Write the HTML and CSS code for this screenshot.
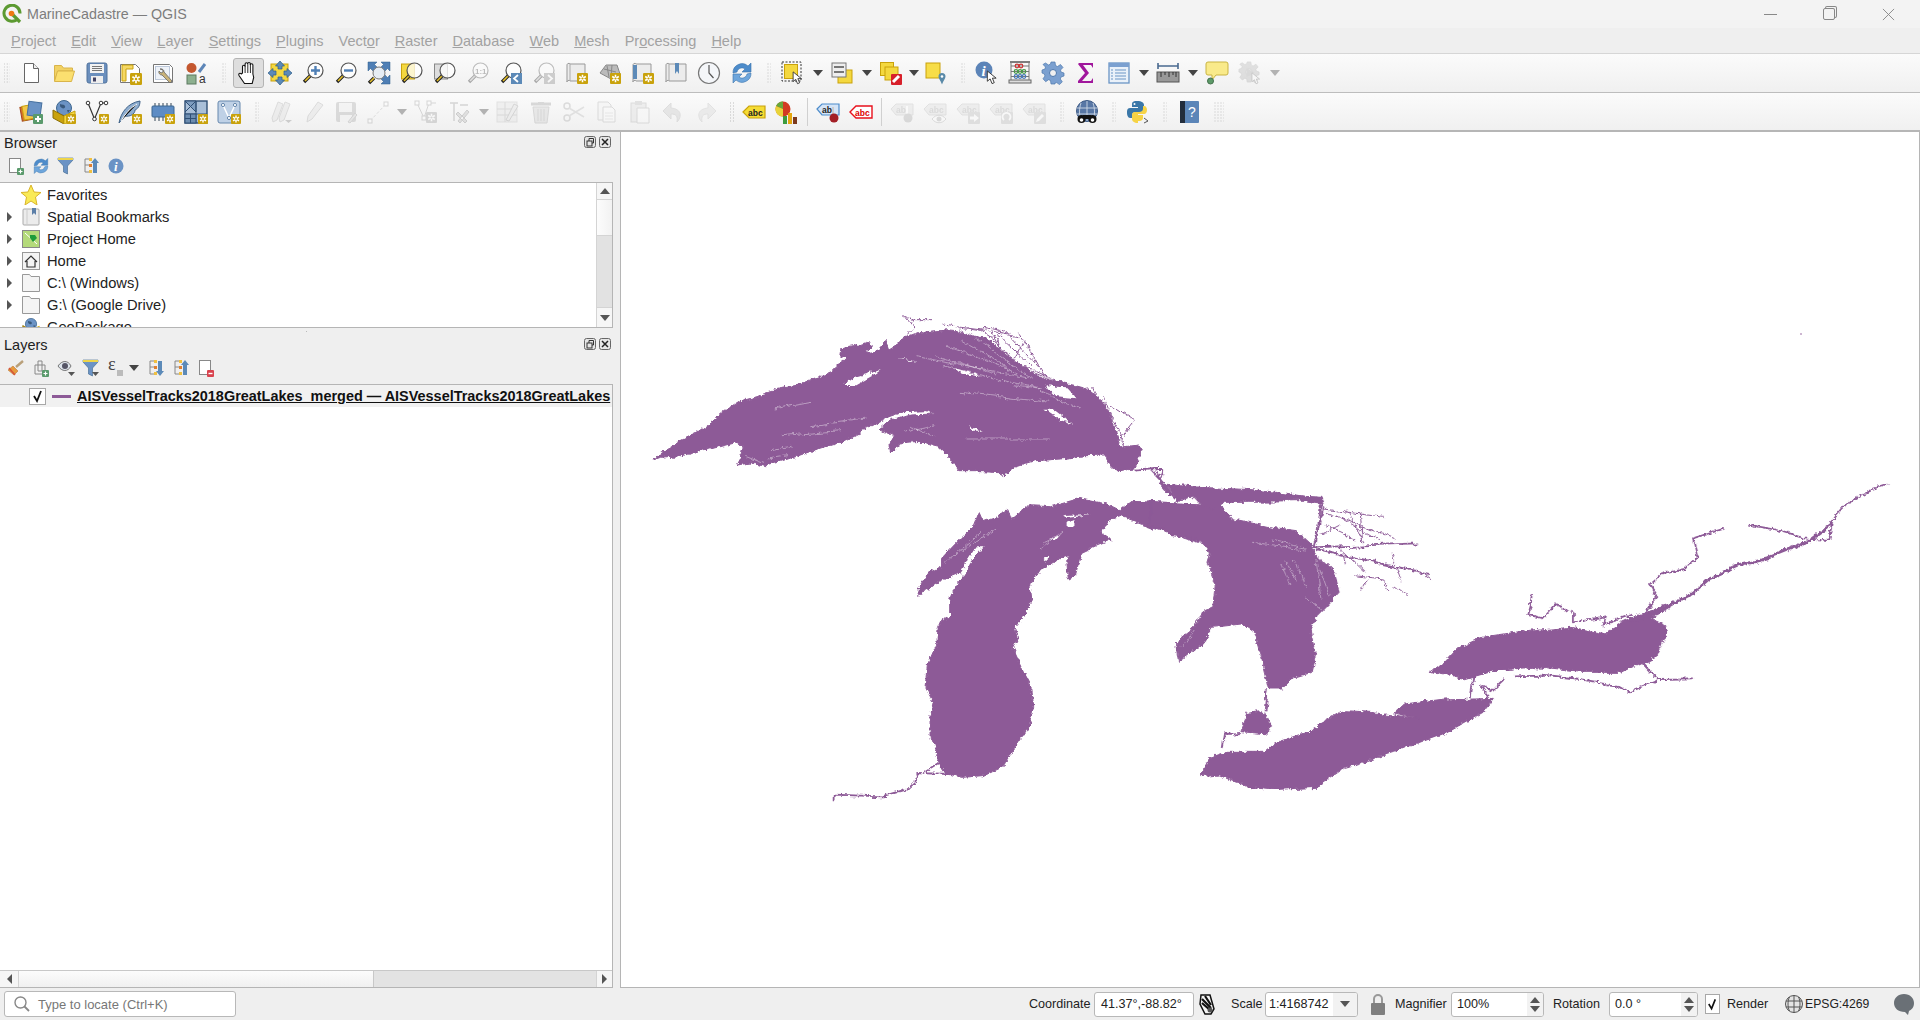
FILE: index.html
```html
<!DOCTYPE html>
<html lang="en">
<head>
<meta charset="utf-8">
<title>MarineCadastre — QGIS</title>
<link rel="stylesheet" href="styles.css">
</head>
<body>
<svg class="defs" width="0" height="0" aria-hidden="true">
<defs>
<filter id="rough" filterUnits="userSpaceOnUse" x="620" y="132" width="1298" height="854" color-interpolation-filters="sRGB">
<feTurbulence type="fractalNoise" baseFrequency=".035" numOctaves="2" seed="4" result="n1"/>
<feDisplacementMap in="SourceGraphic" in2="n1" scale="7" xChannelSelector="R" yChannelSelector="G" result="d1"/>
<feTurbulence type="fractalNoise" baseFrequency=".3" numOctaves="2" seed="9" result="n2"/>
<feDisplacementMap in="d1" in2="n2" scale="4" xChannelSelector="G" yChannelSelector="R"/>
</filter>
<symbol id="gear-badge" viewBox="0 0 10 10"><rect width="10" height="10" rx="1" fill="#c9a20c"/><path d="M5 1.500v7M2 3.200l6 3.600M8 3.200L2 6.800" stroke="#fff" stroke-width="1.400"/><circle cx="5" cy="5" r="1" fill="#c9a20c"/></symbol>
<symbol id="mag" viewBox="0 0 24 24"><circle cx="14.500" cy="9.500" r="7.500" fill="#fff" fill-opacity=".75" stroke="#555" stroke-width="1.200"/><path d="M9 15L3 21" stroke="#222" stroke-width="3.400"/><path d="M8.700 15.300L4 20" stroke="#e6c12a" stroke-width="1.600"/></symbol>
<symbol id="cursor" viewBox="0 0 12 16"><path d="M1 1l0 11 3-2.500 2 5 2.400-1-2-4.800 4 0z" fill="#fff" stroke="#333" stroke-width="1"/></symbol>
<symbol id="new" viewBox="0 0 24 24"><path d="M5.500 2.500h9l5 5v14h-14z" fill="#fff" stroke="#666"/><path d="M14.500 2.500v5h5" fill="#eee" stroke="#666"/></symbol>
<symbol id="open" viewBox="0 0 24 24"><path d="M2.500 20V4.500h7l2 2.500h9v3H6z" fill="#f2d264" stroke="#d9b44a"/><path d="M2.500 20.500l3-10.500h17l-3 10.500z" fill="#fbdf6f" stroke="#d9b44a"/></symbol>
<symbol id="save" viewBox="0 0 24 24"><rect x="2" y="2" width="20" height="20" rx="2" fill="#6b8fbd" stroke="#50729c"/><rect x="5" y="3" width="14" height="9" fill="#f2f2f2"/><path d="M7 5.500h10M7 7.500h10M7 9.500h10" stroke="#777"/><rect x="6" y="15" width="12" height="7" fill="#eee"/><rect x="8" y="16.500" width="3" height="4" fill="#446"/></symbol>
<symbol id="layout" viewBox="0 0 24 24"><path d="M2.500 3.500h15l4 4v14h-19z" fill="#fff" stroke="#777"/><path d="M4 4h11v4H8v12H4z" fill="#f5d865" stroke="#c9a20c"/><use href="#gear-badge" x="12" y="12" width="12" height="12"/></symbol>
<symbol id="layoutmgr" viewBox="0 0 24 24"><path d="M2.500 3.500h16l3 3v15h-19z" fill="#fff" stroke="#777"/><rect x="4.500" y="5.500" width="14" height="13" fill="#eef2f8" stroke="#bcc8da"/><path d="M9 8a3 3 0 0 1 4 3l8 9-2 2-8-8a3 3 0 0 1-3-4l2 2 2-1 0-2z" fill="#c8b27a" stroke="#666" stroke-width=".8"/></symbol>
<symbol id="style" viewBox="0 0 24 24"><circle cx="7.500" cy="7" r="5" fill="#c4572f"/><path d="M15 11L21 3" stroke="#5d86b8" stroke-width="3"/><rect x="3" y="14" width="9" height="9" fill="#8db08f" stroke="#5d7a60"/><text x="15" y="22" class="svg-t">a</text></symbol>
<symbol id="hand" viewBox="0 0 24 24"><path d="M6.500 12V5.500a1.300 1.300 0 0 1 2.600 0V3a1.300 1.300 0 0 1 2.600 0v-.2a1.300 1.300 0 0 1 2.600 0V4a1.300 1.300 0 0 1 2.600 0v9l.8 3.500-1.500 6H8.500L3 14.500c-1-2 1-3 2.300-1.500z" fill="#fff" stroke="#111" stroke-width="1.100"/><path d="M9.100 5v7M11.800 3v9M14.400 3v9" stroke="#111" stroke-width=".9"/></symbol>
<symbol id="pansel" viewBox="0 0 24 24"><rect x="3" y="3" width="17" height="17" fill="#f4d83f" stroke="#c9a20c"/><path d="M12 0l4.500 5H14v3h-4V5H7.500zM12 24l4.500-5H14v-3h-4v3H7.500zM0 12l5-4.500V10h3v4H5v2.500zM24 12l-5-4.500V10h-3v4h3v2.500z" fill="#5c8ab8" stroke="#2d5c8a" stroke-width=".7"/></symbol>
<symbol id="zin" viewBox="0 0 24 24"><use href="#mag" width="24" height="24"/><path d="M14.500 5v9M10 9.500h9" stroke="#4f7fb5" stroke-width="2.400"/></symbol>
<symbol id="zout" viewBox="0 0 24 24"><use href="#mag" width="24" height="24"/><path d="M10 9.500h9" stroke="#4f7fb5" stroke-width="2.400"/></symbol>
<symbol id="zfull" viewBox="0 0 24 24"><path d="M1 1h9L7.500 3.500 10 6 6 10 3.500 7.500 1 10zM23 1h-9l2.500 2.500L14 6l4 4 2.500-2.500L23 10zM23 23h-9l2.500-2.500L14 18l4-4 2.500 2.500L23 14z" fill="#4f7fb5" stroke="#2d5c8a" stroke-width=".5"/><circle cx="12" cy="12" r="6" fill="#e6edf4" stroke="#777"/><path d="M7 17L2 22" stroke="#222" stroke-width="3.400"/><path d="M7 17L3 21" stroke="#e6c12a" stroke-width="1.600"/></symbol>
<symbol id="zsel" viewBox="0 0 24 24"><rect x="1.500" y="3" width="13" height="15" fill="#f4d83f" stroke="#c9a20c"/><use href="#mag" width="24" height="24"/></symbol>
<symbol id="zlay" viewBox="0 0 24 24"><rect x="1.500" y="3" width="13" height="15" fill="#ddd" stroke="#888"/><use href="#mag" width="24" height="24"/></symbol>
<symbol id="znat" viewBox="0 0 24 24"><use href="#mag" width="24" height="24"/><text x="9" y="13" class="svg-s">1:1</text></symbol>
<symbol id="zlast" viewBox="0 0 24 24"><use href="#mag" width="24" height="24"/><rect x="12" y="12" width="11" height="11" fill="#5c8ab8"/><path d="M19 14l-4 3.500 4 3.500" fill="none" stroke="#fff" stroke-width="1.800"/></symbol>
<symbol id="znext" viewBox="0 0 24 24"><use href="#mag" width="24" height="24"/><rect x="12" y="12" width="11" height="11" fill="#888"/><path d="M16 14l4 3.500-4 3.500" fill="none" stroke="#fff" stroke-width="1.800"/></symbol>
<symbol id="mapview" viewBox="0 0 24 24"><path d="M2 4c0-2 3-2 3-1h15v17H5c0-1-3-1-3 1z" fill="#ececec" stroke="#999"/><path d="M5 3v17" stroke="#aaa"/><use href="#gear-badge" x="12" y="12" width="11" height="11"/></symbol>
<symbol id="view3d" viewBox="0 0 24 24"><path d="M2 12l6-8h11l3 9-9 5z" fill="#bbb" stroke="#888"/><path d="M6 8l12 3M9 5l2 11M14 4l-1 12" stroke="#888"/><use href="#gear-badge" x="12" y="12" width="11" height="11"/></symbol>
<symbol id="bookadd" viewBox="0 0 24 24"><path d="M2 4c0-2 3-2 3-1h15v17H5c0-1-3-1-3 1z" fill="#ececec" stroke="#999"/><path d="M2 4h4v14H2z" fill="#5c8ab8"/><use href="#gear-badge" x="12" y="12" width="11" height="11"/></symbol>
<symbol id="bookshow" viewBox="0 0 24 24"><path d="M2 4c0-2 3-2 3-1h17v17H5c0-1-3-1-3 1z" fill="#ececec" stroke="#999"/><path d="M5 3v17" stroke="#aaa"/><path d="M11 2h4v11l-2-3-2 3z" fill="#5c8ab8"/></symbol>
<symbol id="clock" viewBox="0 0 24 24"><circle cx="12" cy="12" r="10.500" fill="#f4f6f9" stroke="#777" stroke-width="1.200"/><path d="M12 4v8l4.500 5" fill="none" stroke="#555" stroke-width="1.200"/></symbol>
<symbol id="refresh" viewBox="0 0 24 24"><path d="M3 12a9 9 0 0 1 15-7l3-3v9h-9l3-3a5 5 0 0 0-8 3z" fill="#4d8ccb" stroke="#3a74ad" stroke-width=".6"/><path d="M21 12a9 9 0 0 1-15 7l-3 3v-9h9l-3 3a5 5 0 0 0 8-3z" fill="#6ea6dc" stroke="#3a74ad" stroke-width=".6"/></symbol>
<symbol id="select" viewBox="0 0 24 24"><rect x="1" y="1" width="19" height="19" fill="none" stroke="#333" stroke-dasharray="2 1.500"/><rect x="3.500" y="3.500" width="13" height="14" fill="#f4d83f" stroke="#c9a20c"/><use href="#cursor" x="11" y="10" width="11" height="14"/></symbol>
<symbol id="selattr" viewBox="0 0 24 24"><rect x="8" y="9" width="14" height="13" fill="#f4d83f" stroke="#c9a20c"/><rect x="2" y="2" width="14" height="14" fill="#eee" stroke="#777"/><path d="M4 6h10M4 11h10" stroke="#777" stroke-width="2"/></symbol>
<symbol id="desel" viewBox="0 0 24 24"><rect x="1.500" y="1.500" width="13" height="13" fill="#f4d83f" stroke="#c9a20c"/><rect x="6" y="6" width="13" height="13" fill="#f4d83f" stroke="#c9a20c"/><rect x="12" y="13" width="11" height="11" rx="1" fill="#d7202a"/><path d="M14 21l6-6" stroke="#fff" stroke-width="3"/></symbol>
<symbol id="selloc" viewBox="0 0 24 24"><rect x="2" y="2" width="14" height="15" fill="#f7dd48" stroke="#c9a20c"/><path d="M18 12a3.500 3.500 0 0 1 3.500 3.500c0 2-2 4-3.500 8-1.500-4-3.500-6-3.500-8A3.500 3.500 0 0 1 18 12z" fill="#5a8aa8"/><circle cx="18" cy="15.500" r="1.300" fill="#fff"/></symbol>
<symbol id="identify" viewBox="0 0 24 24"><circle cx="9" cy="9" r="8.500" fill="#5c84b8"/><text x="6.500" y="14.500" class="svg-i">i</text><use href="#cursor" x="11" y="9" width="12" height="15"/></symbol>
<symbol id="abacus" viewBox="0 0 24 24"><path d="M2 1h20" stroke="#555" stroke-width="1.500"/><rect x="1" y="19" width="22" height="3" fill="#ddd" stroke="#666"/><path d="M3 2v17M21 2v17M3 5h18M3 10.500h18M3 15.500h18" stroke="#777"/><g fill="none" stroke-width="1.200"><g stroke="#c33"><circle cx="9" cy="5" r="1.800"/><circle cx="13" cy="5" r="1.800"/></g><g stroke="#4a9a4a"><circle cx="8" cy="10.500" r="1.800"/><circle cx="12" cy="10.500" r="1.800"/><circle cx="16" cy="10.500" r="1.800"/></g><g stroke="#4a7ab8"><circle cx="8" cy="15.500" r="1.800"/><circle cx="12" cy="15.500" r="1.800"/><circle cx="16" cy="15.500" r="1.800"/></g></g></symbol>
<symbol id="gear" viewBox="0 0 24 24"><path d="M10 1h4l.5 3.500 2 1L19.500 3.500l2.500 3-2.500 2.500.5 2 3 1v3l-3 1-.7 2 2 2.800-2.800 2.800-2.800-2-2 .8L14 23h-4l-.5-3.500-2-.8-2.800 2L2 17.800l2-2.800-.7-2L1 12V9l3-1 .5-2L2 3.500 4.500 2l3 2 2-1z" fill="#7ba0d0" stroke="#4d78ad" stroke-width=".7"/><circle cx="12" cy="12" r="3.500" fill="#f0f0f0" stroke="#4d78ad"/></symbol>
<symbol id="sigma" viewBox="0 0 24 24"><path d="M5 2h14v5l-2-3H9l6 8-7 8h9l2-3v5H4v-2l7-8L4 3z" fill="#a0179c"/></symbol>
<symbol id="table" viewBox="0 0 24 24"><rect x="2" y="2" width="20" height="20" fill="#eaf1f9" stroke="#6a95c5" stroke-width="1.300"/><rect x="2" y="2" width="20" height="4" fill="#7ba0d0"/><path d="M8 9h11M8 12h11M8 15h11M8 18h11M4 9h2M4 12h2M4 15h2M4 18h2" stroke="#6a95c5" stroke-width="1.200"/></symbol>
<symbol id="measure" viewBox="0 0 24 24"><path d="M2 5h20M2 2v6M22 2v6" stroke="#4a6a90" stroke-width="1.600"/><rect x="1" y="11" width="22" height="10" fill="#999" stroke="#555"/><path d="M5 11v5M9 11v3M13 11v5M17 11v3M20 11v5" stroke="#333"/></symbol>
<symbol id="tip" viewBox="0 0 24 24"><path d="M4 1h17a2 2 0 0 1 2 2v9a2 2 0 0 1-2 2H11l-4 5v-5H3a2 2 0 0 1-2-2V3a2 2 0 0 1 2-2z" fill="#f9ea8a" stroke="#c9b442"/><circle cx="5.500" cy="20" r="3" fill="#5d9a68" stroke="#44714c"/></symbol>
<symbol id="gearplay" viewBox="0 0 24 24"><use href="#gear" width="22" height="22"/><path d="M8.500 7l8 4.500-8 4.500z" fill="#888"/><use href="#cursor" x="13" y="11" width="10" height="13"/></symbol>
<symbol id="dsm" viewBox="0 0 24 24"><rect x="2" y="6" width="14" height="14" fill="#d86b30" stroke="#a54a1a" transform="rotate(-10 9 13)"/><rect x="4" y="5" width="14" height="14" fill="#f3c748" stroke="#c9a20c" transform="rotate(-10 11 12)"/><rect x="9" y="2" width="13" height="14" fill="#6b93c5" stroke="#46709f" transform="rotate(8 15 9)"/><rect x="14" y="14" width="10" height="10" rx="1" fill="#5a9a6c"/><path d="M19 16v6M16 19h6" stroke="#fff" stroke-width="2"/></symbol>
<symbol id="newgpkg" viewBox="0 0 24 24"><circle cx="12" cy="8" r="7.500" fill="#6b93c5" stroke="#3d668f"/><path d="M8 4c2 1 4 0 5 2s-2 3-3 2-2 0-2-4zM15 10l3 0-2 3z" fill="#39597c"/><path d="M1 10l11 6v8L1 18z" fill="#c9a20c" stroke="#8a6e08"/><path d="M12 16l11-5v8l-11 5z" fill="#f4d83f" stroke="#c9a20c"/><use href="#gear-badge" x="14" y="14" width="10" height="10"/></symbol>
<symbol id="newshape" viewBox="0 0 24 24"><path d="M3 3l6.500 16L16 3h5" fill="none" stroke="#333" stroke-width="1.200"/><g fill="#fff" stroke="#333"><circle cx="3" cy="3" r="1.800"/><circle cx="9.500" cy="19" r="1.800"/><circle cx="16" cy="3" r="1.800"/><circle cx="21" cy="3" r="1.800"/></g><use href="#gear-badge" x="14" y="14" width="10" height="10"/></symbol>
<symbol id="feather" viewBox="0 0 24 24"><path d="M1 23C3 12 10 3 22 1c0 6-3 8-5 9 0 4-5 7-10 6-2 2-4 5-6 7z" fill="#8faed0" stroke="#3f6288"/><path d="M3 21C7 14 12 8 19 4" stroke="#fff"/><use href="#gear-badge" x="14" y="14" width="10" height="10"/></symbol>
<symbol id="chip" viewBox="0 0 24 24"><path d="M4 3v18M8 3v18M12 3v18M16 3v18M20 3v18" stroke="#345" stroke-width="1"/><rect x="1" y="6" width="22" height="11" rx="1" fill="#5d8cc4" stroke="#3d668f"/><use href="#gear-badge" x="14" y="14" width="10" height="10"/></symbol>
<symbol id="mesh" viewBox="0 0 24 24"><rect x="1" y="1" width="22" height="22" fill="#a9bfd8" stroke="#2f4f74" stroke-width="1.400"/><path d="M1 1l11 11V1zM1 12L12 1" fill="#7e9dc0" stroke="#2f4f74"/><path d="M12 1v22M1 14h22" stroke="#2f4f74"/><rect x="1" y="14" width="11" height="9" fill="#6d8db0" stroke="#2f4f74"/><path d="M1 18.500h11M6.500 14v9" stroke="#2f4f74"/><use href="#gear-badge" x="14" y="14" width="10" height="10"/></symbol>
<symbol id="vlayer" viewBox="0 0 24 24"><rect x="1" y="1" width="22" height="22" rx="2" fill="#bfd1e6" stroke="#6788ad"/><path d="M6 5l6 13 6-13" fill="none" stroke="#fff" stroke-width="1.500"/><g fill="#fff" stroke="#6788ad"><circle cx="6" cy="5" r="1.600"/><circle cx="12" cy="18" r="1.600"/><circle cx="18" cy="5" r="1.600"/></g><use href="#gear-badge" x="14" y="14" width="10" height="10"/></symbol>
<symbol id="editall" viewBox="0 0 24 24"><path d="M2 18L8 2l5 2-6 16-4 2zM9 18L15 2l5 2-6 16-4 2z" fill="#ddd" stroke="#aaa"/><path d="M15 20h7l-3.500 3z" fill="#888"/></symbol>
<symbol id="pencil" viewBox="0 0 24 24"><path d="M5 22l1-6L16 2l5 3-11 14z" fill="#ddd" stroke="#aaa"/></symbol>
<symbol id="saveoff" viewBox="0 0 24 24"><rect x="2" y="2" width="20" height="20" rx="2" fill="#aaa"/><rect x="5" y="3" width="13" height="9" fill="#eee"/><rect x="6" y="15" width="12" height="7" fill="#eee"/><path d="M14 22l7-9 2 2-7 8z" fill="#ccc" stroke="#999"/></symbol>
<symbol id="digit" viewBox="0 0 24 24"><path d="M4 21L20 4" stroke="#aaa" stroke-dasharray="3 2"/><rect x="2" y="19" width="4" height="4" fill="#fff" stroke="#999"/><rect x="18" y="2" width="4" height="4" fill="#fff" stroke="#999"/></symbol>
<symbol id="vtx" viewBox="0 0 24 24"><path d="M3 3l7 15 5-15h7" fill="none" stroke="#999"/><g fill="#fff" stroke="#999"><rect x="1" y="1" width="4" height="4"/><rect x="8" y="16" width="4" height="4"/><rect x="13" y="1" width="4" height="4"/></g><use href="#gear-badge" x="12" y="12" width="11" height="11"/></symbol>
<symbol id="tools" viewBox="0 0 24 24"><path d="M3 3h8M7 3v18M13 5h8" stroke="#999" stroke-width="1.500" fill="none"/><path d="M11 12l9 9-2 2-9-9zM20 10l-9 11 2 2 9-11z" fill="#bbb" stroke="#888"/></symbol>
<symbol id="attrs" viewBox="0 0 24 24"><rect x="1" y="2" width="20" height="20" fill="#e3e2cc" stroke="#bbb"/><path d="M1 9h20M1 15h20M9 2v20" stroke="#aaa"/><path d="M10 20l8-16 4 2-9 15z" fill="#ddd" stroke="#999"/></symbol>
<symbol id="trash" viewBox="0 0 24 24"><path d="M2 4h20" stroke="#b79c92" stroke-width="3"/><path d="M9 2h6v2H9z" fill="#b79c92"/><path d="M4 7h16l-2 16H6z" fill="#d8ccc7" stroke="#b79c92"/><path d="M9 9v12M12 9v12M15 9v12" stroke="#b79c92"/></symbol>
<symbol id="cut" viewBox="0 0 24 24"><circle cx="5" cy="6" r="3" fill="none" stroke="#aaa" stroke-width="1.500"/><circle cx="5" cy="18" r="3" fill="none" stroke="#aaa" stroke-width="1.500"/><path d="M7 8l15 9M7 16l15-9" stroke="#bbb" stroke-width="1.600"/></symbol>
<symbol id="copy" viewBox="0 0 24 24"><path d="M3 2h10l3 3v15H3z" fill="#f2f2f2" stroke="#aaa"/><path d="M8 7h9l3 3v12H8z" fill="#fafafa" stroke="#aaa"/><path d="M10 13h8M10 16h8M10 19h8" stroke="#ccc"/></symbol>
<symbol id="paste" viewBox="0 0 24 24"><rect x="3" y="3" width="15" height="19" fill="#e0ddd2" stroke="#aaa"/><rect x="7" y="1" width="7" height="4" fill="#bbb"/><path d="M9 8h12v15H9z" fill="#fafafa" stroke="#aaa"/></symbol>
<symbol id="undo" viewBox="0 0 24 24"><path d="M10 3L2 11l8 8v-5c5 0 7 2 6 8 5-5 5-13-6-14z" fill="#cfc8bb" stroke="#b8b1a4"/></symbol>
<symbol id="redo" viewBox="0 0 24 24"><path d="M14 3l8 8-8 8v-5c-5 0-7 2-6 8-5-5-5-13 6-14z" fill="#d5d8d2" stroke="#bcc0b8"/></symbol>
<symbol id="lbl" viewBox="0 0 24 24"><path d="M1 12l6-6h16v12H7z" fill="#f5dc34" stroke="#c9a20c" stroke-width="1.200"/><text x="6" y="16" class="svg-l">abc</text></symbol>
<symbol id="diagram" viewBox="0 0 24 24"><circle cx="8" cy="9" r="7.500" fill="#d23b22"/><path d="M8 9V1.500A7.500 7.500 0 0 0 1 6z" fill="#68a83c"/><path d="M8 9L1 6a7.500 7.500 0 0 0 7 10.500z" fill="#e8d33a"/><rect x="13" y="13" width="4" height="11" fill="#e5a70e"/><rect x="18" y="17" width="4" height="7" fill="#7c3a1d"/><rect x="8" y="16" width="4" height="8" fill="#3d9c3e"/></symbol>
<symbol id="lblpin" viewBox="0 0 24 24"><path d="M1 9l5-5h17v11H6z" fill="#d4e4f7" stroke="#4d8ccb" stroke-width="1.200"/><text x="6" y="13" class="svg-l">ab</text><path d="M17 7v9" stroke="#ccc" stroke-width="2"/><circle cx="18" cy="18" r="4.500" fill="#a31f26"/></symbol>
<symbol id="lblred" viewBox="0 0 24 24"><path d="M1 12l6-6h16v12H7z" fill="#fff" stroke="#e8101c" stroke-width="1.400"/><text x="6" y="16" class="svg-r">abc</text></symbol>
<symbol id="lblpinoff" viewBox="0 0 24 24"><path d="M1 9l5-5h17v11H6z" fill="#ddd" stroke="#bbb"/><text x="6" y="13" class="svg-g">ab</text><path d="M17 6v8" stroke="#fff" stroke-width="2"/><circle cx="18" cy="18" r="4.500" fill="#aaa"/></symbol>
<symbol id="lbleye" viewBox="0 0 24 24"><path d="M1 9l5-5h17v11H6z" fill="#ddd" stroke="#bbb"/><text x="6" y="13" class="svg-g">abc</text><path d="M9 19c4-5 10-5 14 0-4 5-10 5-14 0z" fill="#fff" stroke="#aaa"/><circle cx="16" cy="19" r="2.500" fill="#aaa"/></symbol>
<symbol id="lblmove" viewBox="0 0 24 24"><path d="M1 9l5-5h17v11H6z" fill="#ddd" stroke="#bbb"/><text x="6" y="13" class="svg-g">abc</text><rect x="12" y="12" width="12" height="12" rx="1" fill="#bbb"/><path d="M14 16.500h4V14l5 4-5 4v-2.500h-4z" fill="#fff"/></symbol>
<symbol id="lblrot" viewBox="0 0 24 24"><path d="M1 9l5-5h17v11H6z" fill="#ddd" stroke="#bbb"/><text x="6" y="13" class="svg-g">abc</text><rect x="12" y="12" width="12" height="12" rx="1" fill="#bbb"/><path d="M15 20a4 4 0 1 1 5 0" fill="none" stroke="#fff" stroke-width="1.800"/></symbol>
<symbol id="lbledit" viewBox="0 0 24 24"><path d="M1 9l5-5h17v11H6z" fill="#ddd" stroke="#bbb"/><text x="6" y="13" class="svg-g">abc</text><rect x="12" y="12" width="12" height="12" rx="1" fill="#bbb"/><path d="M14 22l1-3 5-5 2 2-5 5z" fill="#fff"/></symbol>
<symbol id="metasearch" viewBox="0 0 24 24"><circle cx="12" cy="11" r="10.500" fill="#5877a5" stroke="#3d5a85"/><path d="M2 8h20M2 14h20M12 1v20M6 3c-2 6-2 12 0 17M18 3c2 6 2 12 0 17" stroke="#cfd9e7" stroke-width=".9" fill="none"/><circle cx="6.500" cy="19" r="4" fill="#111"/><circle cx="17.500" cy="19" r="4" fill="#111"/><rect x="8" y="15" width="8" height="4" fill="#111"/><circle cx="6.500" cy="20" r="1.800" fill="#fff"/><circle cx="17.500" cy="20" r="1.800" fill="#fff"/></symbol>
<symbol id="python" viewBox="0 0 24 24"><path d="M11 1c-5 0-5 2-5 4v2h6v1H4C1 8 1 11 1 13s1 5 3 5h2v-3c0-2 2-3 4-3h5c2 0 3-1 3-3V5c0-2-2-4-7-4z" fill="#3a77a8"/><path d="M12 21c5 0 5-2 5-4v-2h-5v-1h6c2 0 3-2 3-4s-1-4-3-4h-1v3c0 2-2 3-4 3H9c-2 0-3 1-3 3v4c0 2 2 4 6 4z" fill="#f6d345"/><circle cx="8.500" cy="4" r="1" fill="#fff"/><path d="M18 18l4 3-4 2" fill="none" stroke="#555"/></symbol>
<symbol id="help" viewBox="0 0 24 24"><rect x="3" y="1" width="19" height="22" rx="1" fill="#5b85b8"/><rect x="3" y="1" width="5" height="22" fill="#222d3c"/><text x="11" y="17" class="svg-q">?</text></symbol>
<symbol id="add" viewBox="0 0 18 18"><rect x="2.500" y="1.500" width="11" height="14" fill="#fff" stroke="#888"/><rect x="10" y="11" width="7" height="7" rx="1" fill="#5a9a6c"/><path d="M13.500 12.500v4M11.500 14.500h4" stroke="#fff" stroke-width="1.200"/></symbol>
<symbol id="filter" viewBox="0 0 18 18"><path d="M1 1h15v2l-5.500 6v8l-4-2V9L1 3z" fill="#6b93c5" stroke="#3d668f" stroke-width=".6"/><path d="M1 1h15v2H1z" fill="#eed54a"/></symbol>
<symbol id="colup" viewBox="0 0 18 18"><path d="M3 2h4M3 2v13h4M3 8h4" fill="none" stroke="#888"/><rect x="7" y="1" width="3" height="3" fill="#f0c040"/><rect x="7" y="7" width="3" height="3" fill="#e08030"/><rect x="7" y="13" width="3" height="3" fill="#f0c040"/><path d="M13 1l4 5h-2v10h-4V6H9z" fill="#5c8ab8"/></symbol>
<symbol id="coldown" viewBox="0 0 18 18"><path d="M3 2h4M3 2v13h4M3 8h4" fill="none" stroke="#888"/><rect x="7" y="1" width="3" height="3" fill="#f0c040"/><rect x="7" y="7" width="3" height="3" fill="#e08030"/><rect x="7" y="13" width="3" height="3" fill="#f0c040"/><path d="M13 17l4-5h-2V2h-4v10H9z" fill="#5c8ab8"/></symbol>
<symbol id="info" viewBox="0 0 18 18"><circle cx="9" cy="9" r="7.500" fill="#6b93c5"/><text x="7" y="14" class="svg-ii">i</text></symbol>
<symbol id="brush" viewBox="0 0 18 18"><path d="M6 7l5 5-4 4-6-5z" fill="#e79a3c" stroke="#b0692a" stroke-width=".5"/><path d="M9 8l7-6" stroke="#b9a07a" stroke-width="2.400"/><path d="M2 9l6 7" stroke="#d5533c" stroke-width="1.400"/></symbol>
<symbol id="addgroup" viewBox="0 0 18 18"><path d="M3 6h10v9H3zM6 2h4v10H6z" fill="#f0f0f0" stroke="#888"/><rect x="10" y="11" width="7" height="7" rx="1" fill="#5a9a6c"/><path d="M13.500 12.500v4M11.500 14.500h4" stroke="#fff" stroke-width="1.200"/></symbol>
<symbol id="eye" viewBox="0 0 18 18"><path d="M1 7c4-6 10-6 13 0-3 6-9 6-13 0z" fill="#dde4ec" stroke="#777"/><circle cx="8" cy="7" r="3" fill="#556"/><path d="M11 13h7l-3.500 4z" fill="#555"/></symbol>
<symbol id="filt2" viewBox="0 0 18 18"><path d="M1 1h15v2l-5.500 6v8l-4-2V9L1 3z" fill="#6b93c5" stroke="#3d668f" stroke-width=".6"/><path d="M1 1h15v2H1z" fill="#eed54a"/><path d="M10 13h7l-3.500 4z" fill="#555"/></symbol>
<symbol id="expr" viewBox="0 0 18 18"><text x="1" y="11" class="svg-e">ε</text><rect x="10" y="11" width="6" height="6" fill="#bbb"/></symbol>
<symbol id="rmlayer" viewBox="0 0 18 18"><rect x="2.500" y="1.500" width="11" height="14" fill="#fff" stroke="#888"/><rect x="10" y="11" width="7" height="7" rx="1" fill="#d9434e"/><path d="M11.500 14.500h4" stroke="#fff" stroke-width="1.400"/></symbol>
<symbol id="star" viewBox="0 0 20 20"><path d="M10 0l3 7 7 .5-5.500 4.500L16 20l-6-4-6 4 1.500-8L0 7.500 7 7z" fill="#f9ea56" stroke="#d9b42a"/></symbol>
<symbol id="t-book" viewBox="0 0 18 18"><rect x="1" y="1" width="16" height="16" rx="1" fill="#ececec" stroke="#aaa"/><path d="M5 1v16" stroke="#ccc"/><path d="M10 0h4v7l-2-2-2 2z" fill="#5c7fa8"/></symbol>
<symbol id="t-home" viewBox="0 0 18 18"><rect x=".5" y=".5" width="17" height="17" fill="#b4da7a" stroke="#888"/><path d="M3 3l12 11" stroke="#fff"/><path d="M8 5l5 0 2 3-4 4-3-4z" fill="#1e9b3a"/></symbol>
<symbol id="t-house" viewBox="0 0 18 18"><rect x=".5" y=".5" width="17" height="17" fill="#f4f4f4" stroke="#999"/><path d="M3 10l6-6 6 6M5 9v6h8V9" fill="none" stroke="#333" stroke-width="1.200"/></symbol>
<symbol id="t-folder" viewBox="0 0 18 18"><path d="M.5.500h7l1.500 2H17.500v15H.5z" fill="#f4f4f4" stroke="#999"/></symbol>
<symbol id="t-gpkg" viewBox="0 0 20 20"><use href="#newgpkg" width="20" height="20"/></symbol>
<symbol id="float" viewBox="0 0 12 12"><rect x=".5" y=".5" width="11" height="11" rx="2" fill="#e6e6e6" stroke="#666"/><rect x="3" y="5" width="5" height="5" fill="none" stroke="#333"/><path d="M5 5V2.500h4.500V7H8" fill="none" stroke="#333"/></symbol>
<symbol id="closex" viewBox="0 0 12 12"><rect x=".5" y=".5" width="11" height="11" rx="2" fill="#e6e6e6" stroke="#666"/><path d="M3 3l6 6M9 3l-6 6" stroke="#222" stroke-width="1.500"/></symbol>
<symbol id="globe" viewBox="0 0 20 20"><circle cx="10" cy="10" r="8.500" fill="#e4e4e4" stroke="#555"/><path d="M2 7h16M2 13h16M10 1v18M5.500 3c-2 4-2 10 0 14M14.500 3c2 4 2 10 0 14" stroke="#555" fill="none"/></symbol>
<symbol id="extent" viewBox="0 0 20 22"><path d="M4 2h9l4 14-3 5H8L3 11z" fill="#f4f4f4" stroke="#111" stroke-width="1.500"/><path d="M5 6l9 9M5 10l8 7M8 3l6 9" stroke="#111" stroke-width="2.200"/><circle cx="13" cy="17" r="2.500" fill="#555"/></symbol>
<symbol id="lock" viewBox="0 0 16 24"><path d="M4 12V7a4 4 0 0 1 8 0v5" fill="none" stroke="#999" stroke-width="2"/><rect x="1" y="11" width="14" height="12" rx="1" fill="#7f7f7f"/></symbol>
<symbol id="msg" viewBox="0 0 22 22"><path d="M11 1c6 0 10 4 10 9 0 5-3 7-5 8l-1 4-3-3c-7 0-11-4-11-9s4-9 10-9z" fill="#6a7076"/></symbol>
<symbol id="search" viewBox="0 0 16 16"><circle cx="6.500" cy="6.500" r="5.500" fill="none" stroke="#888" stroke-width="1.400"/><path d="M10.500 10.500L15 15" stroke="#888" stroke-width="1.800"/></symbol>
<symbol id="qgis" viewBox="0 0 20 20"><path d="M16 14.500A8 8 0 1 1 18 9.500" fill="none" stroke="#5c9a31" stroke-width="3"/><path d="M10 10l8 8" stroke="#5c9a31" stroke-width="3.200"/><circle cx="9.500" cy="9.500" r="2.800" fill="#ee7913"/></symbol>
</defs>
</svg>

<div class="app">
  <header class="titlebar">
    <svg class="logo"><use href="#qgis"/></svg>
    <span class="title">MarineCadastre — QGIS</span>
    <div class="winbtns">
      <span class="win-min"></span>
      <span class="win-max"></span>
      <svg class="win-close" viewBox="0 0 14 14"><path d="M1 1l12 12M13 1L1 13" stroke="#888" stroke-width="1"/></svg>
    </div>
  </header>
  <nav class="menubar">
    <span><u>P</u>roject</span><span><u>E</u>dit</span><span><u>V</u>iew</span><span><u>L</u>ayer</span><span><u>S</u>ettings</span><span><u>P</u>lugins</span><span>Vect<u>o</u>r</span><span><u>R</u>aster</span><span><u>D</u>atabase</span><span><u>W</u>eb</span><span><u>M</u>esh</span><span>Pr<u>o</u>cessing</span><span><u>H</u>elp</span>
  </nav>

  <div class="toolbar">
    <i class="h h-first"></i>
    <b class="t"><svg><use href="#new"/></svg></b>
    <b class="t"><svg><use href="#open"/></svg></b>
    <b class="t"><svg><use href="#save"/></svg></b>
    <b class="t"><svg><use href="#layout"/></svg></b>
    <b class="t"><svg><use href="#layoutmgr"/></svg></b>
    <b class="t"><svg><use href="#style"/></svg></b>
    <i class="h h20"></i>
    <b class="t t-active"><svg><use href="#hand"/></svg></b>
    <b class="t"><svg><use href="#pansel"/></svg></b>
    <b class="t"><svg><use href="#zin"/></svg></b>
    <b class="t"><svg><use href="#zout"/></svg></b>
    <b class="t"><svg><use href="#zfull"/></svg></b>
    <b class="t"><svg><use href="#zsel"/></svg></b>
    <b class="t"><svg><use href="#zlay"/></svg></b>
    <b class="t off"><svg><use href="#znat"/></svg></b>
    <b class="t"><svg><use href="#zlast"/></svg></b>
    <b class="t off"><svg><use href="#znext"/></svg></b>
    <b class="t"><svg><use href="#mapview"/></svg></b>
    <b class="t"><svg><use href="#view3d"/></svg></b>
    <b class="t"><svg><use href="#bookadd"/></svg></b>
    <b class="t"><svg><use href="#bookshow"/></svg></b>
    <b class="t"><svg><use href="#clock"/></svg></b>
    <b class="t"><svg><use href="#refresh"/></svg></b>
    <i class="h h18"></i>
    <b class="t"><svg><use href="#select"/></svg></b><em class="a"></em>
    <b class="t"><svg><use href="#selattr"/></svg></b><em class="a"></em>
    <b class="t"><svg><use href="#desel"/></svg></b><em class="a a12"></em>
    <b class="t"><svg><use href="#selloc"/></svg></b>
    <i class="h h18"></i>
    <b class="t"><svg><use href="#identify"/></svg></b>
    <b class="t"><svg><use href="#abacus"/></svg></b>
    <b class="t"><svg><use href="#gear"/></svg></b>
    <b class="t"><svg><use href="#sigma"/></svg></b>
    <b class="t"><svg><use href="#table"/></svg></b><em class="a"></em>
    <b class="t"><svg><use href="#measure"/></svg></b><em class="a"></em>
    <b class="t"><svg><use href="#tip"/></svg></b>
    <b class="t off off2"><svg><use href="#gearplay"/></svg></b><em class="a a-off"></em>
  </div>

  <div class="toolbar toolbar-2">
    <i class="h h-first"></i>
    <b class="t"><svg><use href="#dsm"/></svg></b>
    <b class="t"><svg><use href="#newgpkg"/></svg></b>
    <b class="t"><svg><use href="#newshape"/></svg></b>
    <b class="t"><svg><use href="#feather"/></svg></b>
    <b class="t"><svg><use href="#chip"/></svg></b>
    <b class="t"><svg><use href="#mesh"/></svg></b>
    <b class="t"><svg><use href="#vlayer"/></svg></b>
    <i class="h h20"></i>
    <b class="t t32 off"><svg><use href="#editall"/></svg></b>
    <b class="t t32 off"><svg><use href="#pencil"/></svg></b>
    <b class="t t32 off"><svg><use href="#saveoff"/></svg></b>
    <b class="t t32 off"><svg><use href="#digit"/></svg></b><em class="a a-off"></em>
    <b class="t off"><svg><use href="#vtx"/></svg></b>
    <b class="t off"><svg><use href="#tools"/></svg></b><em class="a a-off"></em>
    <b class="t off"><svg><use href="#attrs"/></svg></b>
    <b class="t off"><svg><use href="#trash"/></svg></b>
    <b class="t off"><svg><use href="#cut"/></svg></b>
    <b class="t off"><svg><use href="#copy"/></svg></b>
    <b class="t off"><svg><use href="#paste"/></svg></b>
    <b class="t off"><svg><use href="#undo"/></svg></b>
    <b class="t off"><svg><use href="#redo"/></svg></b>
    <i class="h h15"></i>
    <b class="t"><svg><use href="#lbl"/></svg></b>
    <b class="t"><svg><use href="#diagram"/></svg></b>
    <i class="sep"></i>
    <b class="t"><svg><use href="#lblpin"/></svg></b>
    <b class="t"><svg><use href="#lblred"/></svg></b>
    <i class="sep"></i>
    <b class="t off"><svg><use href="#lblpinoff"/></svg></b>
    <b class="t off"><svg><use href="#lbleye"/></svg></b>
    <b class="t off"><svg><use href="#lblmove"/></svg></b>
    <b class="t off"><svg><use href="#lblrot"/></svg></b>
    <b class="t off"><svg><use href="#lbledit"/></svg></b>
    <i class="h h20"></i>
    <b class="t"><svg><use href="#metasearch"/></svg></b>
    <i class="h h18"></i>
    <b class="t"><svg><use href="#python"/></svg></b>
    <i class="h h18"></i>
    <b class="t"><svg><use href="#help"/></svg></b>
    <i class="h h24"></i>
  </div>

  <main class="main">
    <aside class="dock">
      <section class="panel panel-browser">
        <div class="ptitle"><span>Browser</span><svg class="pbtn"><use href="#float"/></svg><svg class="pbtn"><use href="#closex"/></svg></div>
        <div class="ptools">
          <svg class="pi"><use href="#add"/></svg>
          <svg class="pi"><use href="#refresh"/></svg>
          <svg class="pi"><use href="#filter"/></svg>
          <svg class="pi"><use href="#colup"/></svg>
          <svg class="pi"><use href="#info"/></svg>
        </div>
        <div class="tree tree-browser">
          <div class="rows">
            <div class="row"><span class="exp exp-none"></span><svg class="ti ti-star"><use href="#star"/></svg>Favorites</div>
            <div class="row"><span class="exp"></span><svg class="ti"><use href="#t-book"/></svg>Spatial Bookmarks</div>
            <div class="row"><span class="exp"></span><svg class="ti"><use href="#t-home"/></svg>Project Home</div>
            <div class="row"><span class="exp"></span><svg class="ti"><use href="#t-house"/></svg>Home</div>
            <div class="row"><span class="exp"></span><svg class="ti"><use href="#t-folder"/></svg>C:\ (Windows)</div>
            <div class="row"><span class="exp"></span><svg class="ti"><use href="#t-folder"/></svg>G:\ (Google Drive)</div>
            <div class="row"><span class="exp exp-none"></span><svg class="ti"><use href="#t-gpkg"/></svg>GeoPackage</div>
          </div>
          <div class="vscroll">
            <span class="sb-btn"><i class="tri-up"></i></span>
            <span class="sb-top"></span>
            <span class="sb-thumb"></span>
            <span class="sb-btn sb-btn-b"><i class="tri-down"></i></span>
          </div>
        </div>
      </section>
      <div class="splitter"></div>
      <section class="panel panel-layers">
        <div class="ptitle"><span>Layers</span><svg class="pbtn"><use href="#float"/></svg><svg class="pbtn"><use href="#closex"/></svg></div>
        <div class="ptools">
          <svg class="pi"><use href="#brush"/></svg>
          <svg class="pi"><use href="#addgroup"/></svg>
          <svg class="pi"><use href="#eye"/></svg>
          <svg class="pi"><use href="#filt2"/></svg>
          <svg class="pi pi-n"><use href="#expr"/></svg><em class="a pa"></em>
          <svg class="pi"><use href="#coldown"/></svg>
          <svg class="pi"><use href="#colup"/></svg>
          <svg class="pi"><use href="#rmlayer"/></svg>
        </div>
        <div class="tree tree-layers">
          <div class="lrow">
            <span class="check"><svg viewBox="0 0 14 14"><path d="M3 7l3 5 4-10" fill="none" stroke="#111" stroke-width="1.800"/></svg></span>
            <span class="lsym"></span>
            <span class="lname">AISVesselTracks2018GreatLakes_merged — AISVesselTracks2018GreatLakes</span>
          </div>
          <div class="lfill"></div>
          <div class="hscroll">
            <span class="hb"><i class="tri-left"></i></span>
            <span class="hthumb"></span>
            <span class="htrack"></span>
            <span class="hb hb-r"><i class="tri-right"></i></span>
          </div>
        </div>
      </section>
    </aside>

    <div class="map">
      <svg class="mapsvg" viewBox="620 132 1298 855" width="1298" height="855">
        <g filter="url(#rough)">
        <g transform="matrix(.35714 0 0 .33333 638 299)">
          <path class="fill" d="M35 485L48 478 60 462 110 430 160 405 205 370 240 340 300 298 370 278 440 262 490 240 545 215 565 195 585 180 565 170 568 150 600 143 640 128 645 145 630 165 660 160 690 125 695 135 700 150 745 120 800 98 860 92 915 98 960 118 1010 150 1060 190 1100 220 1130 238 1215 255 1250 265 1290 300 1320 340 1340 420 1345 440 1360 440 1400 435 1412 450 1400 480 1385 510 1340 515 1315 490 1310 468 1250 470 1180 480 1110 485 1050 505 1020 530 1005 518 960 515 895 515 875 480 840 445 780 430 735 435 705 465 700 440 715 410 690 400 672 390 700 365 760 345 830 342 800 332 740 335 700 350 640 385 560 430 500 450 420 480 355 500 320 488 272 495 287 465 292 440 265 432 200 450 120 470 60 475z"/>
          <g class="holes">
            <path d="M572 258L600 235 680 210 660 225 605 258z"/>
            <path d="M1138 262L1200 265 1225 295 1160 288zM1135 335L1165 335 1210 372 1170 360zM885 208L960 232 945 235 895 218zM722 178L790 188 760 186zM924 382L960 395 935 395z"/>
          </g>
          <g class="tracks">
            <path d="M820 100L1150 240M860 95L1200 260M900 90L1100 240M950 90L1130 250M980 95L1060 235M1000 100L1030 240M1065 95L1135 230M1075 130L1040 200M1010 110L1100 200M1040 110L1120 205M850 75L960 90M930 88L1065 110M740 50L770 65 815 65M745 55L770 90 745 120M690 125L665 160M960 85L1040 100"/>
            <path d="M1240 290L1300 400M1270 265L1330 420M1300 300L1345 430M1320 320L1385 365 1345 420M1300 285L1360 440M1340 430L1365 490 1400 440"/>
            <path class="thick" d="M1385 515L1440 510 1465 560 1505 600 1530 570 1568 565M1445 530L1500 590"/>
            <path class="thick" d="M870 1425L780 1422 770 1450 745 1475 680 1495 545 1490 545 1510M800 1420L840 1393 862 1425"/>
          </g>
          <g class="whites">
            <path d="M380 330L480 310M480 380L640 360M400 410L560 395M370 455L430 445M780 170L1100 240M850 200L1200 290M900 280L1150 310M760 385L830 410M1000 130L1110 225M940 115L1090 235M900 125L1060 225M860 140L1040 215M830 170L1000 225M1120 280L1240 330M1050 260L1220 285M360 480L420 470M300 470L350 490M740 400L830 380M920 420L1150 420"/>
          </g>
          <path class="fill" d="M860 1425L840 1390 815 1320 815 1250 820 1210 798 1165 805 1100 830 1040 835 990 845 965 870 950 870 900 885 860 905 835 895 825 860 840 810 875 780 892 790 860 815 820 850 800 850 775 890 730 940 680 955 640 965 665 1005 650 1030 635 1040 665 1085 625 1090 617 1150 620 1235 595 1300 610 1350 635 1380 610 1568 618 1568 730 1480 700 1400 670 1350 650 1310 665 1295 700 1325 720 1280 740 1240 760 1225 825 1205 840 1200 770 1175 780 1140 800 1125 810 1095 860 1100 900 1075 950 1050 980 1060 1020 1045 1050 1075 1120 1100 1170 1105 1220 1090 1290 1060 1340 1020 1400 960 1430 910 1435z"/>
          <g class="holes">
            <path d="M895 825L945 745 965 745 925 800 905 835zM1203 668L1222 660 1222 684 1203 684zM1150 720L1180 708 1165 725zM1125 775L1140 770 1138 788zM1190 648L1265 645 1200 654z"/>
          </g>
          <g class="whites">
            <path d="M900 760L1000 690M860 790L960 700M1130 730L1180 705M1120 745L1190 700"/>
          </g>
        </g>
        <g transform="matrix(.4912 0 0 .33333 1148 459)">
          <path class="fill" d="M0 130L60 135 145 140 170 180 250 205 300 215 330 255 340 290 375 340 385 400 360 440 340 470 330 510 340 580 330 640 295 655 270 690 245 690 230 600 215 520 190 495 130 505 110 550 90 575 60 610 55 560 65 530 100 490 110 455 130 440 135 370 120 310 125 285 100 240 50 230 0 195z"/>
          <path class="fill" d="M30 75L100 85 210 92 255 100 320 115 350 118 355 140 305 128 200 130 150 130 130 155 105 135 90 112 60 130 50 100z"/>
          <path class="fill" d="M105 950L120 900 160 880 235 880 260 850 320 820 400 755 450 760 500 768 545 780 500 762 520 735 600 720 705 715 680 760 600 825 500 880 400 925 340 985 250 992 200 985 180 970 140 945z"/>
          <path class="fill" d="M185 815L200 760 225 755 245 800 240 822z"/>
          <path class="fill" d="M570 640L600 610 625 570 670 540 780 515 860 505 930 525 985 480 1000 465 1050 500 1052 530 1035 590 990 620 960 640 880 640 780 625 700 635 640 660z"/>
          <path class="fill" d="M1005 465L1060 440 1090 420 1020 480 960 495z"/>
          <g class="tracks">
            <path class="thick" d="M5 30L25 30 20 70 35 95M0 35L30 80M240 690L235 760M185 822L155 825 150 870M660 650L655 715M680 680L700 695 725 660M675 680L695 715"/>
            <path class="thick" d="M330 265L550 253M335 265L355 145M340 270L570 345M350 140L340 250M1010 455L1035 410 1020 378 1045 345 1090 330 1115 295 1105 235 1170 205M1220 197L1270 210 1330 235 1385 240 1390 190 1430 120 1470 90 1503 75"/>
            <path class="broad" d="M1010 460L1060 440 1100 410 1140 360 1200 320 1260 300 1320 265 1390 190"/>
            <path class="thick" d="M780 410L770 465 800 475 825 435 865 460 865 490 930 475 925 500 985 470M1005 610L1035 660 1105 658M1035 665L975 700 950 680 860 660 800 650 745 652"/>
            <path d="M355 150L480 175M360 160L500 240M400 150L440 250M430 160L435 250M390 270L440 340M420 350L480 360 490 390M435 395L450 360M495 290L515 370M395 280L400 315M360 200L420 240M380 170L470 245M350 230L390 200M500 380L525 408M560 345L575 360"/>
            <path d="M320 280L380 400M340 300L375 400M310 300L360 430M100 480L60 570M110 500L80 560"/>
          </g>
          <g class="whites">
            <path d="M280 300L300 370M300 300L320 390M340 300L350 420M270 310L285 380M320 420L350 450M345 330L365 410M210 250L320 270M250 240L320 265M90 510L65 565"/>
          </g>
        </g>
        </g>
        <circle class="speck" cx="1800" cy="334" r=".8"/>
      </svg>
    </div>
  </main>

  <footer class="status">
    <div class="locator"><svg class="loc-i"><use href="#search"/></svg><span>Type to locate (Ctrl+K)</span></div>
    <div class="status-right">
      <span class="lab lab-coord">Coordinate</span>
      <span class="box box-coord">41.37°,-88.82°</span>
      <svg class="st-extent"><use href="#extent"/></svg>
      <span class="lab lab-scale">Scale</span>
      <span class="box box-scale"><span class="val">1:4168742</span><span class="drop"><i class="tri-down"></i></span></span>
      <svg class="st-lock"><use href="#lock"/></svg>
      <span class="lab lab-mag">Magnifier</span>
      <span class="box box-mag"><span class="val">100%</span><span class="spin"><i class="tri-up"></i><i class="tri-down"></i></span></span>
      <span class="lab lab-rot">Rotation</span>
      <span class="box box-rot"><span class="val">0.0 °</span><span class="spin"><i class="tri-up"></i><i class="tri-down"></i></span></span>
      <span class="check check-st"><svg viewBox="0 0 14 14"><path d="M3 7l3 5 4-10" fill="none" stroke="#111" stroke-width="1.800"/></svg></span>
      <span class="lab lab-render">Render</span>
      <svg class="st-globe"><use href="#globe"/></svg>
      <span class="lab lab-epsg">EPSG:4269</span>
      <svg class="st-msg"><use href="#msg"/></svg>
    </div>
  </footer>
</div>
</body>
</html>
```
FILE: styles.css
```css
* { box-sizing: border-box; }
html, body { margin: 0; padding: 0; }
body { font-family: "Liberation Sans", Arial, sans-serif; font-size: 14.5px; color: #222; background: #efefef; overflow: hidden; }
.defs { display: block; height: 0; width: 0; }
.app { width: 1920px; height: 1020px; display: flex; flex-direction: column; overflow: hidden; }

.svg-t { font: 12px "Liberation Sans", sans-serif; fill: #333; }
.svg-s { font: bold 8px "Liberation Sans", sans-serif; fill: #555; }
.svg-i { font: italic bold 15px "Liberation Serif", serif; fill: #fff; }
.svg-ii { font: italic bold 13px "Liberation Serif", serif; fill: #fff; }
.svg-l { font: bold 8.500px "Liberation Sans", sans-serif; fill: #222; }
.svg-r { font: bold 8.500px "Liberation Sans", sans-serif; fill: #d00; }
.svg-g { font: bold 8.500px "Liberation Sans", sans-serif; fill: #aaa; }
.svg-q { font: 14px "Liberation Sans", sans-serif; fill: #fff; }
.svg-e { font: 18px "Liberation Serif", serif; fill: #444; }

.titlebar { height: 28px; flex: none; background: #f3f3f3; display: flex; align-items: center; padding-left: 2px; }
.logo { width: 20px; height: 20px; margin-right: 5px; }
.title { color: #7d7d7d; font-size: 14.3px; }
.winbtns { margin-left: auto; display: flex; align-items: center; height: 28px; }
.win-min { width: 13px; height: 1px; background: #888; margin-right: 46px; }
.win-max { width: 12px; height: 12px; border: 1px solid #888; border-radius: 2px; margin-right: 47px; box-shadow: 2px -2px 0 -1px #f3f3f3, 2px -2px 0 0 #888; }
.win-close { width: 13px; height: 13px; margin-right: 25px; }

.menubar { height: 26px; flex: none; background: #efefef; border-bottom: 1px solid #d6d6d6; display: flex; align-items: center; padding-left: 11px; gap: 15px; color: #a2a2a2; font-size: 14.5px; }
.menubar u { text-decoration-thickness: 1px; }

.toolbar { height: 39px; flex: none; display: flex; align-items: center; background: linear-gradient(#fbfbfb, #f0f0f0); border-bottom: 1px solid #bdbdbd; }
.toolbar-2 { height: 39px; border-bottom: 2px solid #b6b6b6; }
.t { width: 33px; height: 30px; flex: none; display: flex; align-items: center; justify-content: center; }
.t svg { width: 24px; height: 24px; display: block; }
.t32 { width: 32px; }
.t-active { width: 31px; background: #dedede; border: 1px solid #b4b4b4; border-radius: 3px; }
.off { opacity: .36; filter: grayscale(1); }
.off2 { opacity: .25; }
.h { flex: none; display: block; height: 20px; background: radial-gradient(circle, #bdbdbd 0 .8px, transparent 1px) center / 3px 3px; background-clip: content-box; }
.h-first { width: 14.500px; padding: 0 5px 0 4px; }
.h20 { width: 20px; padding: 0 7px 0 8px; }
.h18 { width: 18px; padding: 0 6px 0 7px; }
.h15 { width: 15px; padding: 0 4px 0 6px; }
.h24 { width: 24px; padding: 0 6px 0 7px; }
.a { flex: none; width: 16px; height: 10px; display: flex; justify-content: center; align-items: center; }
.a::before { content: ""; border-left: 5px solid transparent; border-right: 5px solid transparent; border-top: 6px solid #444; }
.a12 { width: 12px; }
.a-off { opacity: .38; }
.sep { flex: none; width: 8px; height: 28px; display: block; background: linear-gradient(#d0d0d0, #d0d0d0) center / 1px 100% no-repeat; }

.main { flex: 1; min-height: 0; display: flex; }
.dock { width: 613px; flex: none; display: flex; flex-direction: column; }
.panel { display: flex; flex-direction: column; }
.panel-browser { height: 196px; flex: none; }
.panel-layers { flex: 1; min-height: 0; }
.splitter { height: 6px; flex: none; background: radial-gradient(circle, #bbb 0 .6px, transparent .8px) center / 3px 3px no-repeat; background-size: 3px 3px; }
.ptitle { height: 22px; flex: none; display: flex; align-items: center; padding: 0 2px 0 4px; gap: 2px; font-size: 14.5px; color: #222; }
.ptitle span { margin-right: auto; }
.pbtn { width: 12px; height: 12px; margin-left: 1px; margin-top: -3px; }
.ptools { height: 24px; margin-bottom: 4px; flex: none; display: flex; align-items: center; padding-left: 7px; gap: 7px; }
.pi { width: 18px; height: 18px; flex: none; }
.pa { width: 15px; margin: 0 -1px 0 -6px; }
.tree { flex: 1; min-height: 0; background: #fff; border: 1px solid #b5b5b5; border-width: 1px 1px 1px 0; }
.tree-browser { display: flex; overflow: hidden; }
.rows { flex: 1; min-width: 0; padding-top: 1px; overflow: hidden; }
.row { height: 22px; display: flex; align-items: center; font-size: 14.7px; color: #222; white-space: nowrap; }
.exp { width: 22px; height: 11px; flex: none; margin-right: 0; position: relative; }
.exp::before { content: ""; display: block; margin-left: 7px; width: 0; height: 0; border-top: 5px solid transparent; border-bottom: 5px solid transparent; border-left: 5px solid #555; }
.exp-none::before { display: none; }
.ti { width: 18px; height: 18px; margin-right: 7px; flex: none; }
.ti-star { width: 20px; height: 20px; margin-left: -1px; margin-right: 6px; }

.vscroll { width: 16px; flex: none; display: flex; flex-direction: column; border-left: 1px solid #d4d4d4; background: #f5f5f5; }
.sb-btn { height: 17px; flex: none; display: flex; align-items: center; justify-content: center; border-bottom: 1px solid #d4d4d4; background: #f6f6f6; }
.sb-btn-b { height: 19px; border-bottom: 0; }
.sb-top { height: 35px; flex: none; background: linear-gradient(90deg, #fcfcfc, #f2f2f2); }
.sb-thumb { flex: 1; background: #e2e2e2; border-top: 1px solid #d4d4d4; border-bottom: 1px solid #d4d4d4; }
.tri-up, .tri-down, .tri-left, .tri-right { display: block; width: 0; height: 0; }
.tri-up { border-left: 5px solid transparent; border-right: 5px solid transparent; border-bottom: 6px solid #555; }
.tri-down { border-left: 5px solid transparent; border-right: 5px solid transparent; border-top: 6px solid #555; }
.tri-left { border-top: 5px solid transparent; border-bottom: 5px solid transparent; border-right: 5px solid #555; }
.tri-right { border-top: 5px solid transparent; border-bottom: 5px solid transparent; border-left: 5px solid #555; }

.tree-layers { display: flex; flex-direction: column; overflow: hidden; }
.lrow { height: 22px; flex: none; background: #f1f1f1; display: flex; align-items: center; overflow: hidden; padding-left: 29px; }
.check { width: 17px; height: 17px; flex: none; background: #fff; border: 1px solid #a8a8a8; display: flex; align-items: center; justify-content: center; }
.check svg { width: 14px; height: 14px; }
.lsym { width: 19px; height: 3px; flex: none; background: #8d5a97; margin: 0 6px 0 6px; }
.lname { font-weight: 700; text-decoration: underline; color: #111; font-size: 14.45px; white-space: nowrap; }
.lfill { flex: 1; }
.hscroll { height: 17px; flex: none; display: flex; border-top: 1px solid #c8c8c8; background: #f5f5f5; }
.hb { width: 18px; flex: none; display: flex; align-items: center; justify-content: center; background: #f6f6f6; }
.hb-r { width: 16px; border-left: 1px solid #d4d4d4; }
.hthumb { width: 355px; flex: none; background: linear-gradient(#fcfcfc, #f0f0f0); border-left: 1px solid #d4d4d4; }
.htrack { flex: 1; background: #e3e3e3; border-left: 1px solid #c8c8c8; }

.map { flex: 1; margin-left: 7px; background: #fff; border: 1px solid #b5b5b5; border-top: 0; overflow: hidden; }
.mapsvg { display: block; }
.fill { fill: #8d5a97; stroke: #8d5a97; stroke-width: 1px; stroke-linejoin: round; vector-effect: non-scaling-stroke; }
.holes path { fill: #fff; stroke: none; }
.tracks path { fill: none; stroke: #8d5a97; stroke-width: 1px; vector-effect: non-scaling-stroke; }
.tracks path.thick { stroke-width: 1.800px; stroke-linejoin: round; }
.tracks path.broad { stroke-width: 3px; stroke-linejoin: round; }
.whites path { fill: none; stroke: #fff; stroke-opacity: .4; stroke-width: 1px; vector-effect: non-scaling-stroke; }
.speck { fill: #8d5a97; }

.status { height: 32px; flex: none; display: flex; align-items: center; background: #efefef; }
.locator { width: 232px; height: 26px; margin-left: 4px; background: #fff; border: 1px solid #b8b8b8; border-radius: 3px; display: flex; align-items: center; color: #777; font-size: 13px; flex: none; }
.loc-i { width: 16px; height: 16px; margin: 0 8px 0 9px; flex: none; }
.status-right { margin-left: auto; display: flex; align-items: center; font-size: 12.6px; color: #222; padding-right: 5px; }
.lab { flex: none; white-space: nowrap; }
.lab-coord { width: 62px; }
.box { height: 25px; background: #fff; border: 1px solid #b8b8b8; border-radius: 3px; display: flex; align-items: center; flex: none; overflow: hidden; color: #222; }
.val { padding-left: 5px; flex: 1; white-space: nowrap; }
.box-coord { width: 100px; margin-left: 3px; padding-left: 6px; white-space: nowrap; }
.st-extent { width: 20px; height: 22px; margin-left: 3px; flex: none; }
.lab-scale { margin-left: 14px; width: 31px; }
.box-scale { width: 93px; margin-left: 3px; }
.box-scale .val { padding-left: 3px; }
.drop { width: 24px; height: 100%; flex: none; background: #f2f2f2; display: flex; align-items: center; justify-content: center; }
.st-lock { width: 16px; height: 24px; margin-left: 12px; flex: none; }
.lab-mag { margin-left: 9px; width: 53px; }
.box-mag { width: 93px; margin-left: 3px; }
.spin { width: 16px; height: 100%; flex: none; background: #f2f2f2; display: flex; flex-direction: column; align-items: center; justify-content: center; gap: 3px; }
.lab-rot { margin-left: 9px; width: 47px; }
.box-rot { width: 89px; margin-left: 9px; }
.check-st { margin-left: 7px; width: 15px; height: 20px; }
.lab-render { margin-left: 7px; width: 41px; }
.st-globe { width: 20px; height: 20px; margin-left: 16px; flex: none; }
.lab-epsg { margin-left: 1px; width: 63px; font-size: 12.2px; }
.st-msg { width: 22px; height: 22px; margin-left: 25px; flex: none; }
```
